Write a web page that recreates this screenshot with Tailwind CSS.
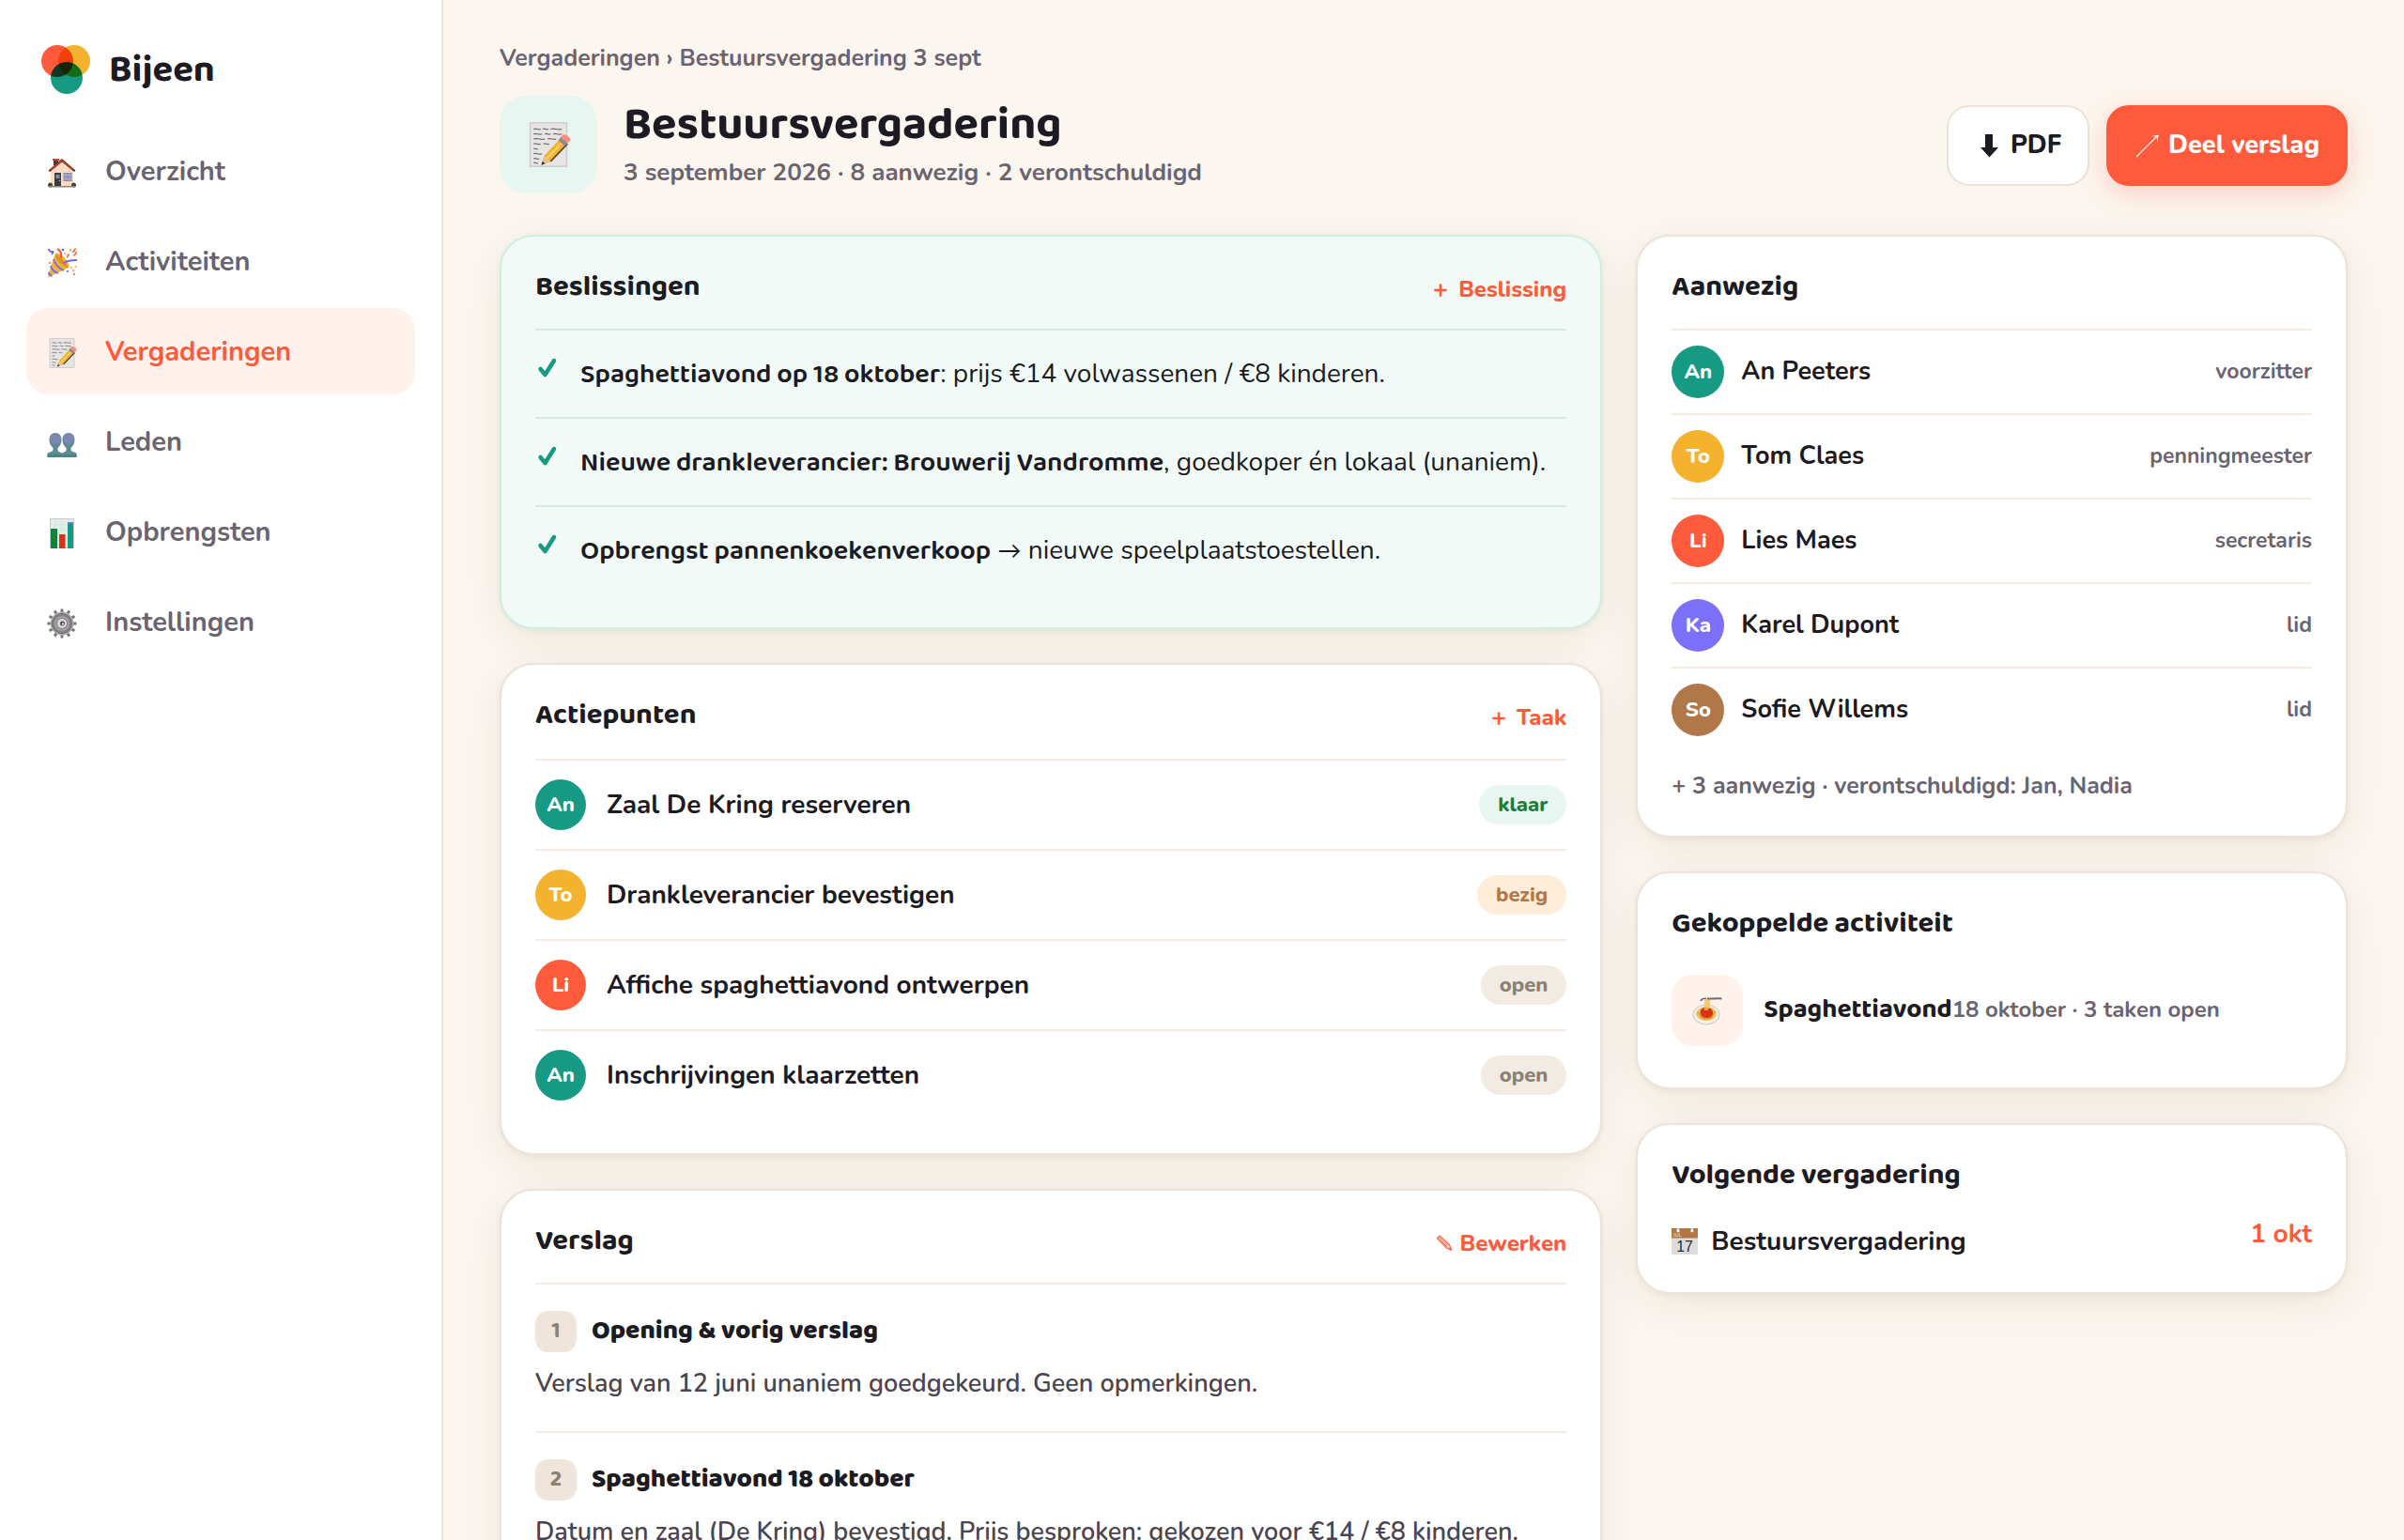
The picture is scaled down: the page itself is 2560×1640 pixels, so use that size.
<!DOCTYPE html>
<html lang="nl">
<head>
  <meta charset="utf-8">
  <meta name="viewport" content="width=device-width, initial-scale=1">
  <title>Bestuursvergadering · Bijeen</title>
  <script src="https://cdn.jsdelivr.net/npm/@tailwindcss/browser@4"></script>
</head>
<body class="flex h-screen overflow-hidden bg-[#fbf6ef] font-['Nunito','Lato',sans-serif] text-[#1c1a22]">

  <!-- Icon sprite -->
  <svg class="hidden" aria-hidden="true">
    <symbol id="i-house" viewBox="0 0 32 32">
      <path d="M7 1h5v7H7z" fill="#4a3a3a" />
      <path d="M6 1h7v2H6z" fill="#d4452a" />
      <path d="M4 13 16 3l12 10v17H4z" fill="#fbdcc0" />
      <path d="M1.500 13.500 16 1l14.500 12.500-1.500 1.500L16 4.500 3 15z" fill="#3c3a40" />
      <path d="M4 12.500 16 3l12 9.500" fill="none" stroke="#d63a1e" stroke-width="1.500" />
      <path d="M8 16h7v14H8z" fill="#3a3840" />
      <path d="M9.500 18h4v4h-4z" fill="#7d8ea8" />
      <circle cx="13.500" cy="24.500" r=".8" fill="#f4b22e" />
      <path d="M17.500 16h9v9h-9z" fill="#8d8890" />
      <path d="M18.500 17h7v7h-7z" fill="#a9a4f0" />
      <path d="M22 17v7M18.500 20.500h7" stroke="#8d8890" />
      <circle cx="3.500" cy="29" r="2.500" fill="#3f4a3f" />
      <circle cx="28.500" cy="29" r="2.500" fill="#3f4a3f" />
      <path d="M2 30h28v1.500H2z" fill="#8a8378" />
    </symbol>
    <symbol id="i-party" viewBox="0 0 32 32">
      <path d="M9 6c4-1 8 2 11 6s4 7 3 9L2 31c-1 0-1.500-1-1-2z" fill="#f4b22e" />
      <path d="M9 6c4 3 11 9 14 15-5 0-15-9-14-15z" fill="#d8912a" />
      <path d="M7 12c2 6 6 10 11 12M4 19c1 4 4 7 8 8M1.500 26c1 2 2 3 4 4" fill="none" stroke="#7c6fe8" stroke-width="2" />
      <path d="M18 16c3-2 7-3 14-3" fill="none" stroke="#6f63f0" stroke-width="2" />
      <path d="M11 1c4 2 5 5 4 10" fill="none" stroke="#ff5a3c" stroke-width="2.200" />
      <path d="M1 2c3-1 1 3 4 2s1 2 0 3" fill="none" stroke="#5d57e8" stroke-width="1.600" />
      <path d="M21 10c2 0 0-3 3-3M27 4c3 1 1-3 4-3M28 8c3 0 2-3 4-4" fill="none" stroke="#ff5a3c" stroke-width="1.600" />
      <circle cx="17" cy="2" r="1.200" fill="#5d57e8" />
      <circle cx="19.500" cy="6" r="1.100" fill="#f4b22e" />
      <circle cx="25" cy="2.500" r="1" fill="#d8912a" />
      <circle cx="30.500" cy="20" r="1.100" fill="#f4b22e" />
      <circle cx="26" cy="21" r="1.100" fill="#f4b22e" />
      <circle cx="22" cy="25" r="1.100" fill="#5d57e8" />
      <circle cx="29" cy="28" r="1.300" fill="#ff8a78" />
      <circle cx="28" cy="24" r="1" fill="#d8912a" />
      <circle cx="3" cy="16" r="1" fill="#ff5a3c" />
    </symbol>
    <symbol id="i-memo" viewBox="0 0 32 32">
      <path d="M3 .5h26v31H3z" fill="#e6e5e4" stroke="#cfcdca" />
      <path d="M5.500 5c2-1 3 1 5 0m1.500 0c2-1 2 1 4 0m1.500 0c3-1 5 1 8 0M5.500 8.500c2-1 4 1 6 0m2 0c2-1 2 1 4 0m2 0c2-1 3 1 6 0M5.500 12c3-1 5 1 8 0m2 0c2-1 4 1 6 0M5.500 15.500c2-1 3 1 5 0m2 0c2-1 2 1 4 0M5.500 19c1-1 2 1 3 0M5.500 22.500c2-1 3 1 6 0M5.500 26c2-1 2 1 4 0M5.500 29c1-1 2 1 3 0" fill="none" stroke="#6b6769" stroke-width=".8" />
      <path d="m11 30.500 2-6.500L24.500 11.500l5 4L17.500 28z" fill="#f4b22e" />
      <path d="m15 26 12-13" stroke="#ffd264" stroke-width="1.600" />
      <path d="m17.500 28 12-12.500" stroke="#4a4238" stroke-width="1.200" />
      <path d="m11 30.500 2-6.500 4.500 4z" fill="#e6c08c" />
      <path d="m11 30.500.8-2.700 1.800 1.700z" fill="#2c2a2e" />
      <path d="m23 13 2-2.500 5 4.200-2.300 2.300z" fill="#8e8c92" />
      <path d="m24.700 10.800 1.500-1.700c2-1 6 2 5.200 4.200l-1.700 1.700z" fill="#ff8d7c" />
    </symbol>
    <symbol id="i-busts" viewBox="0 0 32 32">
      <path d="M.5 31v-4c1-2 6-1.500 6-4v-2C4 19 2.500 16 2.500 12.500 2.500 8 5 5 9 5s6.500 3 6.500 7.500c0 3.500-1.500 6.500-4 8.500v2c0 2.500 3 2.500 4.500 3.500 1.500-1 4.500-1 4.500-3.500v-2c-2.500-2-4-5-4-8.500C16.500 8 19 5 23 5s6.500 3 6.500 7.500c0 3.500-1.500 6.500-4 8.500v2c0 2.500 5 2 6 4v4z" fill="#5f8a93" />
      <ellipse cx="9" cy="11.500" rx="5.500" ry="5.500" fill="#7d86b4" />
      <ellipse cx="23" cy="11.500" rx="5.500" ry="5.500" fill="#7d86b4" />
      <path d="M.5 28h31v3H.5z" fill="#4a8480" />
    </symbol>
    <symbol id="i-chart" viewBox="0 0 32 32">
      <path d="M3.500.5h25v31h-25z" fill="#e2efe9" stroke="#cbc9c6" />
      <path d="M4 6.500h24M4 12.500h24M4 18.500h24M4 24.500h24M9 1v30M16 1v30M23 1v30" stroke="#cfe2da" stroke-width=".6" />
      <path d="M4 11h7v21H4z" fill="#15803d" />
      <path d="M13 17h6.500v15H13z" fill="#dc3214" />
      <path d="M22 4h6v28h-6z" fill="#169a83" />
      <path d="M22 4h6v1.500h-6z" fill="#7c6ffa" />
    </symbol>
    <symbol id="i-gear" viewBox="0 0 32 32">
      <g stroke="#77747a" stroke-width="3">
        <path d="M16 .5v31M.5 16h31M8.200 2.600l15.600 26.800M2.600 8.200l26.800 15.600M23.800 2.600 8.200 29.400M29.400 8.200 2.600 23.800" />
      </g>
      <circle cx="16" cy="16" r="12.500" fill="#b4b1b3" />
      <circle cx="16" cy="16" r="10.500" fill="#8a878c" stroke="#66636a" />
      <circle cx="16" cy="16" r="7" fill="none" stroke="#a8a5a8" stroke-width="1.500" />
      <circle cx="16" cy="16" r="5" fill="#dddbd9" />
      <circle cx="16.500" cy="16" r="2.500" fill="#4a474e" />
      <circle cx="17" cy="16.500" r="1.200" fill="#dddbd9" />
    </symbol>
    <symbol id="i-spaghetti" viewBox="0 0 32 32">
      <ellipse cx="15" cy="20.500" rx="14" ry="10.500" fill="#f2efec" stroke="#c6c2bd" />
      <ellipse cx="15" cy="19.500" rx="11" ry="7.500" fill="#f0c258" />
      <path d="M6 18c2 4 4 6 8 7M24 17c-1 4-4 7-8 8M8 23c4 3 9 3 14 0" fill="none" stroke="#d8962c" />
      <path d="M8.500 18.500c0-4 3-5.500 6.500-5.500s7 1.500 7 5.500-3 5.500-6.500 5.500-7-1.500-7-5.500z" fill="#dc3214" />
      <path d="M14 16V4.500M16 16V3M18 14V4" stroke="#f0c258" stroke-width="1.600" />
      <path d="M9 6c1-2.500 3-3 6-2.500" fill="none" stroke="#5c5960" stroke-width="1.400" />
      <path d="M16 3.500c5 .5 9-.5 15.500 0" stroke="#6f6c72" stroke-width="2" fill="none" />
    </symbol>
    <symbol id="i-calendar" viewBox="0 0 32 32">
      <path d="M0 9h32v23H0z" fill="#dddcda" />
      <path d="M0 0h32v12H0z" fill="#b07848" />
      <circle cx="8" cy="3" r="1.800" fill="#fff" />
      <circle cx="25" cy="3" r="1.800" fill="#fff" />
      <path d="M8 0v3M25 0v3" stroke="#fff" stroke-width="1.500" />
      <text x="2" y="10.500" font-size="6" font-weight="700" fill="#e5cdb8" font-family="Nunito, sans-serif">JUL</text>
      <text x="16" y="28" font-size="18" font-weight="400" text-anchor="middle" fill="#2b2930" font-family="Liberation Sans, sans-serif">17</text>
    </symbol>
    <symbol id="i-check" viewBox="0 0 24 24">
      <path d="m5.500 13 5 6L20 4" fill="none" stroke="currentColor" stroke-width="4.500" stroke-linecap="round" stroke-linejoin="round" />
    </symbol>
    <symbol id="i-down" viewBox="0 0 28 28">
      <path d="M11 2h8v14h6l-9.500 10.500L6 16h5z" fill="currentColor" />
    </symbol>
    <symbol id="i-share" viewBox="0 0 26 26">
      <path d="M2 25 25 2" fill="none" stroke="currentColor" stroke-width="1.200" />
      <path d="m17 3 8.500-1-1 8.500-1-7z" fill="currentColor" />
    </symbol>
    <symbol id="i-pencil" viewBox="0 0 20 20">
      <path d="m1.500 4 3-3L16 11.500l2.500 6.500-6-2.500z" fill="none" stroke="currentColor" stroke-width="1.200" />
      <path d="m3 2.500 11.500 11M2 3.500l11.500 11M4.500 2l11 10.500M14.500 16.500l2-2.500" stroke="currentColor" />
      <path d="m15.500 16.500 1.500-1.500 1.500 3.500z" fill="currentColor" />
    </symbol>
  </svg>

  <!-- Sidebar -->
  <aside class="w-[472px] shrink-0 border-r-2 border-[#ece3d8] bg-white px-7 pt-12">
    <a href="#" class="flex h-[52px] items-center gap-5 pl-4">
      <svg class="isolate size-[52px]" viewBox="0 0 52 52" aria-hidden="true">
        <circle cx="17" cy="17" r="17" fill="#ff5a3c" class="mix-blend-multiply" />
        <circle cx="35" cy="17" r="17" fill="#f4b22e" class="mix-blend-multiply" />
        <circle cx="27" cy="35" r="17" fill="#169a83" class="mix-blend-multiply" />
      </svg>
      <span class="pt-0.5 font-['Baloo_2','Nunito',sans-serif] text-[40px] leading-[52px] font-bold">Bijeen</span>
    </a>
    <nav class="mt-9 flex flex-col gap-1 text-[29px] font-bold text-[#6b6470]">
      <a href="#" class="flex h-[92px] items-center gap-[30px] rounded-3xl px-[22px] pt-0.5">
        <svg class="mt-0.5 size-8"><use href="#i-house" /></svg>Overzicht
      </a>
      <a href="#" class="flex h-[92px] items-center gap-[30px] rounded-3xl px-[22px] pt-0.5">
        <svg class="mt-0.5 size-8"><use href="#i-party" /></svg>Activiteiten
      </a>
      <a href="#" aria-current="page" class="flex h-[92px] items-center gap-[30px] rounded-3xl bg-[#fff1ec] px-[22px] pt-0.5 text-[#ff5a3c]">
        <svg class="mt-0.5 size-8"><use href="#i-memo" /></svg>Vergaderingen
      </a>
      <a href="#" class="flex h-[92px] items-center gap-[30px] rounded-3xl px-[22px] pt-0.5">
        <svg class="mt-0.5 size-8"><use href="#i-busts" /></svg>Leden
      </a>
      <a href="#" class="flex h-[92px] items-center gap-[30px] rounded-3xl px-[22px] pt-0.5">
        <svg class="mt-0.5 size-8"><use href="#i-chart" /></svg>Opbrengsten
      </a>
      <a href="#" class="flex h-[92px] items-center gap-[30px] rounded-3xl px-[22px] pt-0.5">
        <svg class="mt-0.5 size-8"><use href="#i-gear" /></svg>Instellingen
      </a>
    </nav>
  </aside>

  <main class="min-w-0 flex-1 px-[60px] pt-11">
    <p class="text-[25px] leading-9 font-bold text-[#6b6470]"><a href="#">Vergaderingen</a> › Bestuursvergadering 3 sept</p>

    <header class="mt-[22px] flex items-center">
      <div class="flex size-[104px] items-center justify-center rounded-[28px] bg-[#e8f6f1]">
        <svg class="size-12"><use href="#i-memo" /></svg>
      </div>
      <div class="ml-7">
        <h1 class="font-['Baloo_2','Nunito',sans-serif] text-[49px] leading-[60px] font-bold">Bestuursvergadering</h1>
        <p class="text-[26px] leading-10 font-bold text-[#6b6470]">3 september 2026 · 8 aanwezig · 2 verontschuldigd</p>
      </div>
      <div class="mt-0.5 ml-auto flex gap-[18px] text-[27px] font-extrabold">
        <button type="button" class="flex h-[86px] items-center gap-2.5 rounded-3xl border-2 border-[#ece3d8] bg-white px-7">
          <svg class="size-7"><use href="#i-down" /></svg>PDF
        </button>
        <button type="button" class="flex h-[86px] items-center gap-2.5 rounded-3xl border-2 border-[#ff5a3c] bg-[#ff5a3c] px-7 text-white shadow-[0_8px_28px_rgba(255,90,60,0.25)]">
          <svg class="size-[26px]"><use href="#i-share" /></svg>Deel verslag
        </button>
      </div>
    </header>

    <div class="mt-11 grid grid-cols-[1.55fr_1fr] items-start gap-9">
      <div class="flex flex-col gap-9">

        <!-- Beslissingen -->
        <section class="rounded-[36px] border-2 border-[#cfeee2] bg-[#f1faf7] p-9 shadow-[0_2px_6px_rgba(60,40,20,0.05),0_12px_48px_rgba(60,40,20,0.07)]">
          <div class="mb-[26px] flex h-9 items-end justify-between">
            <h2 class="font-['Baloo_2','Nunito',sans-serif] text-[31px] leading-9 font-bold">Beslissingen</h2>
            <button type="button" class="text-[24px] leading-8 font-extrabold text-[#ff5a3c]">＋ Beslissing</button>
          </div>
          <ul class="text-[28px] leading-11">
            <li class="flex gap-6 border-t-2 border-[#d3ebe2] py-6">
              <svg class="mt-1 size-6 shrink-0 text-[#169a83]"><use href="#i-check" /></svg>
              <p><b class="font-['Baloo_2','Nunito',sans-serif] text-[29px] leading-8 font-semibold">Spaghettiavond op 18 oktober</b>: prijs €14 volwassenen / €8 kinderen.</p>
            </li>
            <li class="flex gap-6 border-t-2 border-[#d3ebe2] py-6">
              <svg class="mt-1 size-6 shrink-0 text-[#169a83]"><use href="#i-check" /></svg>
              <p><b class="font-['Baloo_2','Nunito',sans-serif] text-[29px] leading-8 font-semibold">Nieuwe drankleverancier: Brouwerij Vandromme</b>, goedkoper én lokaal (unaniem).</p>
            </li>
            <li class="flex gap-6 border-t-2 border-[#d3ebe2] py-6">
              <svg class="mt-1 size-6 shrink-0 text-[#169a83]"><use href="#i-check" /></svg>
              <p><b class="font-['Baloo_2','Nunito',sans-serif] text-[29px] leading-8 font-semibold">Opbrengst pannenkoekenverkoop</b> <span class="text-[25px] leading-8">→</span> nieuwe speelplaatstoestellen.</p>
            </li>
          </ul>
        </section>

        <!-- Actiepunten -->
        <section class="rounded-[36px] border-2 border-[#ece3d8] bg-white p-9 shadow-[0_2px_6px_rgba(60,40,20,0.05),0_12px_48px_rgba(60,40,20,0.07)]">
          <div class="mb-7 flex h-9 items-end justify-between">
            <h2 class="font-['Baloo_2','Nunito',sans-serif] text-[31px] leading-9 font-bold">Actiepunten</h2>
            <button type="button" class="text-[24px] leading-8 font-extrabold text-[#ff5a3c]">＋ Taak</button>
          </div>
          <ul class="text-[28px] font-bold">
            <li class="flex items-center gap-[22px] border-t-2 border-[#f3ece2] py-5">
              <span class="flex size-[54px] items-center justify-center rounded-full bg-[#169a83] text-[22px] font-extrabold text-white">An</span>
              <span>Zaal De Kring reserveren</span>
              <span class="ml-auto rounded-full bg-[#e8f6f1] px-5 py-1.5 text-[22px] leading-[30px] font-extrabold text-[#15803d]">klaar</span>
            </li>
            <li class="flex items-center gap-[22px] border-t-2 border-[#f3ece2] py-5">
              <span class="flex size-[54px] items-center justify-center rounded-full bg-[#f4b22e] text-[22px] font-extrabold text-white">To</span>
              <span>Drankleverancier bevestigen</span>
              <span class="ml-auto rounded-full bg-[#ffedd9] px-5 py-1.5 text-[22px] leading-[30px] font-extrabold text-[#b07848]">bezig</span>
            </li>
            <li class="flex items-center gap-[22px] border-t-2 border-[#f3ece2] py-5">
              <span class="flex size-[54px] items-center justify-center rounded-full bg-[#ff5a3c] text-[22px] font-extrabold text-white">Li</span>
              <span>Affiche spaghettiavond ontwerpen</span>
              <span class="ml-auto rounded-full bg-[#f2ebe3] px-5 py-1.5 text-[22px] leading-[30px] font-extrabold text-[#8a8172]">open</span>
            </li>
            <li class="flex items-center gap-[22px] border-t-2 border-[#f3ece2] py-5">
              <span class="flex size-[54px] items-center justify-center rounded-full bg-[#169a83] text-[22px] font-extrabold text-white">An</span>
              <span>Inschrijvingen klaarzetten</span>
              <span class="ml-auto rounded-full bg-[#f2ebe3] px-5 py-1.5 text-[22px] leading-[30px] font-extrabold text-[#8a8172]">open</span>
            </li>
          </ul>
        </section>

        <!-- Verslag -->
        <section class="rounded-[36px] border-2 border-[#ece3d8] bg-white p-9 shadow-[0_2px_6px_rgba(60,40,20,0.05),0_12px_48px_rgba(60,40,20,0.07)]">
          <div class="mb-[26px] flex h-9 items-end justify-between">
            <h2 class="font-['Baloo_2','Nunito',sans-serif] text-[31px] leading-9 font-bold">Verslag</h2>
            <button type="button" class="flex items-center gap-2 text-[24px] leading-8 font-extrabold text-[#ff5a3c]">
              <svg class="size-[18px]"><use href="#i-pencil" /></svg>Bewerken
            </button>
          </div>
          <article class="border-t-2 border-[#f3ece2] py-7">
            <h3 class="flex items-center gap-4 font-['Baloo_2','Nunito',sans-serif] text-[28px] leading-11 font-extrabold">
              <span class="flex size-11 items-center justify-center rounded-[14px] bg-[#efe5db] text-[24px] font-bold text-[#8a8172]">1</span>
              Opening &amp; vorig verslag
            </h3>
            <p class="mt-3 text-[27px] leading-11 font-semibold text-[#4a4550]">Verslag van 12 juni unaniem goedgekeurd. Geen opmerkingen.</p>
          </article>
          <article class="border-t-2 border-[#f3ece2] py-7">
            <h3 class="flex items-center gap-4 font-['Baloo_2','Nunito',sans-serif] text-[28px] leading-11 font-extrabold">
              <span class="flex size-11 items-center justify-center rounded-[14px] bg-[#efe5db] text-[24px] font-bold text-[#8a8172]">2</span>
              Spaghettiavond 18 oktober
            </h3>
            <p class="mt-3 text-[27px] leading-11 font-semibold text-[#4a4550]">Datum en zaal (De Kring) bevestigd. Prijs besproken: gekozen voor €14 / €8 kinderen.</p>
          </article>
        </section>
      </div>

      <div class="flex flex-col gap-9">

        <!-- Aanwezig -->
        <section class="rounded-[36px] border-2 border-[#ece3d8] bg-white p-9 shadow-[0_2px_6px_rgba(60,40,20,0.05),0_12px_48px_rgba(60,40,20,0.07)]">
          <h2 class="mb-[26px] font-['Baloo_2','Nunito',sans-serif] text-[31px] leading-9 font-bold">Aanwezig</h2>
          <ul class="text-[27px] font-bold">
            <li class="flex items-center gap-[18px] border-t-2 border-[#f3ece2] py-4">
              <span class="flex size-14 items-center justify-center rounded-full bg-[#169a83] text-[22px] font-extrabold text-white">An</span>
              <span>An Peeters</span>
              <span class="ml-auto text-[23px] text-[#6b6470]">voorzitter</span>
            </li>
            <li class="flex items-center gap-[18px] border-t-2 border-[#f3ece2] py-4">
              <span class="flex size-14 items-center justify-center rounded-full bg-[#f4b22e] text-[22px] font-extrabold text-white">To</span>
              <span>Tom Claes</span>
              <span class="ml-auto text-[23px] text-[#6b6470]">penningmeester</span>
            </li>
            <li class="flex items-center gap-[18px] border-t-2 border-[#f3ece2] py-4">
              <span class="flex size-14 items-center justify-center rounded-full bg-[#ff5a3c] text-[22px] font-extrabold text-white">Li</span>
              <span>Lies Maes</span>
              <span class="ml-auto text-[23px] text-[#6b6470]">secretaris</span>
            </li>
            <li class="flex items-center gap-[18px] border-t-2 border-[#f3ece2] py-4">
              <span class="flex size-14 items-center justify-center rounded-full bg-[#7c6ffa] text-[22px] font-extrabold text-white">Ka</span>
              <span>Karel Dupont</span>
              <span class="ml-auto text-[23px] text-[#6b6470]">lid</span>
            </li>
            <li class="flex items-center gap-[18px] border-t-2 border-[#f3ece2] py-4">
              <span class="flex size-14 items-center justify-center rounded-full bg-[#b07848] text-[22px] font-extrabold text-white">So</span>
              <span>Sofie Willems</span>
              <span class="ml-auto text-[23px] text-[#6b6470]">lid</span>
            </li>
          </ul>
          <p class="mt-5 text-[25px] leading-[34px] font-bold text-[#6b6470]">+ 3 aanwezig · verontschuldigd: Jan, Nadia</p>
        </section>

        <!-- Gekoppelde activiteit -->
        <section class="rounded-[36px] border-2 border-[#ece3d8] bg-white p-9 shadow-[0_2px_6px_rgba(60,40,20,0.05),0_12px_48px_rgba(60,40,20,0.07)]">
          <h2 class="mb-7 font-['Baloo_2','Nunito',sans-serif] text-[31px] leading-9 font-bold">Gekoppelde activiteit</h2>
          <a href="#" class="flex items-center gap-[22px] py-2">
            <span class="flex size-[76px] items-center justify-center rounded-[22px] bg-[#fff1ec]">
              <svg class="size-8"><use href="#i-spaghetti" /></svg>
            </span>
            <span class="leading-10"><b class="font-['Baloo_2','Nunito',sans-serif] text-[28px] font-bold">Spaghettiavond</b><span class="text-[24px] font-bold text-[#6b6470]">18 oktober · 3 taken open</span></span>
          </a>
        </section>

        <!-- Volgende vergadering -->
        <section class="rounded-[36px] border-2 border-[#ece3d8] bg-white p-9 shadow-[0_2px_6px_rgba(60,40,20,0.05),0_12px_48px_rgba(60,40,20,0.07)]">
          <h2 class="mb-[26px] font-['Baloo_2','Nunito',sans-serif] text-[31px] leading-9 font-bold">Volgende vergadering</h2>
          <div class="flex h-11 justify-between">
            <span class="flex items-center gap-[14px] self-end text-[28px] leading-9 font-bold"><svg class="size-7"><use href="#i-calendar" /></svg>Bestuursvergadering</span>
            <b class="text-[28px] leading-9 font-bold text-[#ff5a3c]">1 okt</b>
          </div>
        </section>
      </div>
    </div>
  </main>
</body>
</html>
